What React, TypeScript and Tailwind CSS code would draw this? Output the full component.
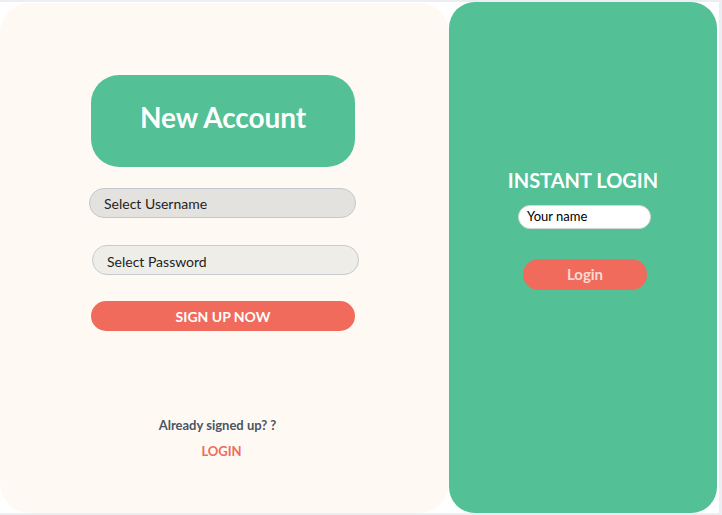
export default function App() {
  return (
    <div className="w-[722px] h-[515px] bg-[#eceef4] pt-[2px] pr-[3px] pb-[2px] font-['Lato',sans-serif]">
      <div className="flex h-full bg-white">
        {/* Sign up panel */}
        <div className="mt-[1px] w-[449px] h-[510px] shrink-0 rounded-[30px] bg-[#fff9f3] flex flex-col">
          <div className="ml-[91px] mt-[72px] w-[264px] h-[92px] rounded-[28px] bg-[#53c096] flex items-center justify-center pb-[8px]">
            <span className="text-[28px] font-bold text-white tracking-[-0.1px]">New Account</span>
          </div>
          <div className="ml-[89px] mt-[21px] w-[267px] h-[30px] rounded-full border border-[#c3c7ce] bg-[#e3e2df] flex items-center pl-[14px]">
            <span className="text-[14px] text-[#1f1f1f]">Select Username</span>
          </div>
          <div className="ml-[92px] mt-[27px] w-[267px] h-[30px] rounded-full border border-[#c6c9cf] bg-[#eeede8] flex items-center pl-[14px]">
            <span className="text-[14px] text-[#1f1f1f] mt-[2px]">Select Password</span>
          </div>
          <div className="ml-[91px] mt-[26px] w-[264px] h-[30px] rounded-full bg-[#f06b5c] flex items-center justify-center">
            <span className="text-[14px] font-bold text-white">SIGN UP NOW</span>
          </div>
          <div className="mt-[86px] ml-[-14px] text-center text-[13px] font-bold text-[#4b5563] leading-[16px]">
            Already signed up? ?
          </div>
          <div className="mt-[10px] ml-[-6px] text-center text-[13px] font-bold text-[#f06b5c] leading-[16px]">
            LOGIN
          </div>
        </div>
        {/* Instant login panel */}
        <div className="w-[268px] h-full shrink-0 rounded-[26px] bg-[#53c096] flex flex-col items-center">
          <div className="mt-[166px] text-[20px] font-bold text-white leading-[24px]">INSTANT LOGIN</div>
          <div className="mt-[13px] ml-[3px] w-[133px] h-[24px] rounded-full bg-white border border-[#d6d6d6] flex items-center pl-[8px]">
            <span className="text-[13px] text-black">Your name</span>
          </div>
          <div className="mt-[30px] ml-[4px] w-[124px] h-[31px] rounded-full bg-[#f06b5c] flex items-center justify-center">
            <span className="text-[15px] font-bold text-[#fcd9d3]">Login</span>
          </div>
        </div>
      </div>
    </div>
  );
}
